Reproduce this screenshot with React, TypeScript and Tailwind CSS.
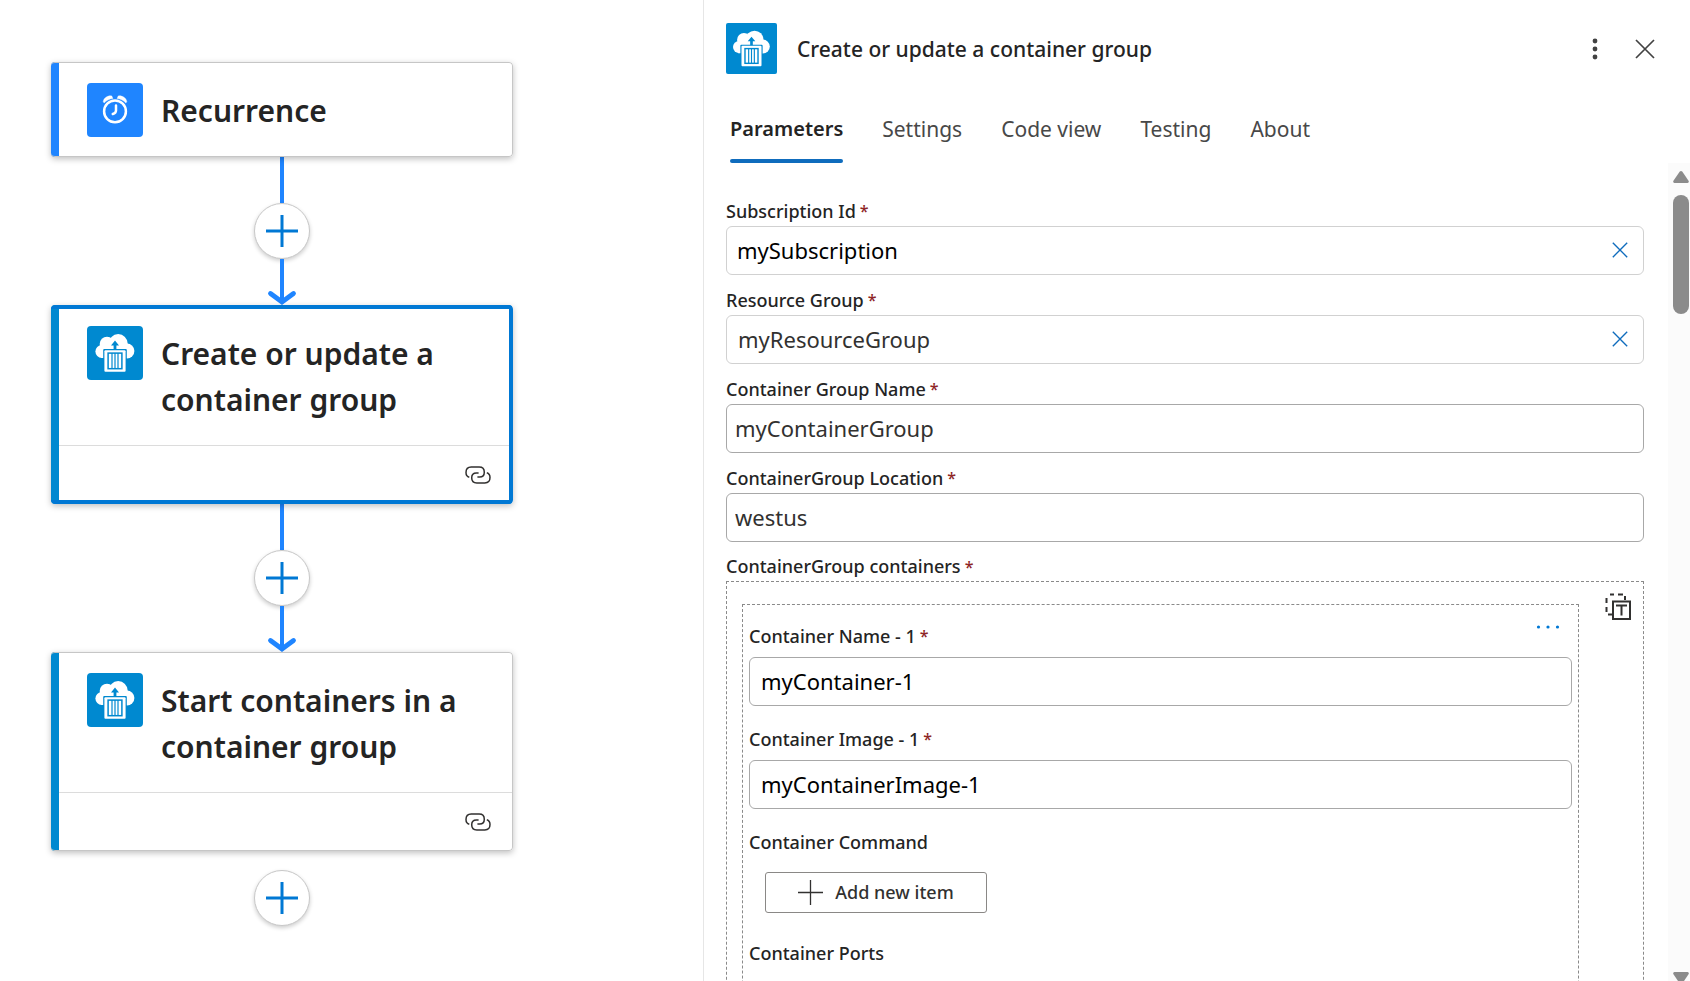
import React, { useId } from "react";

function ContainerIcon({ className }: { className: string }) {
  return (
    <svg viewBox="0 0 54 54" className={className} aria-hidden="true">
      <g fill="#fff">
        <circle cx="13.8" cy="25.5" r="6.4" />
        <circle cx="19" cy="18" r="7.3" />
        <circle cx="30.2" cy="17.6" r="9.5" />
        <circle cx="39" cy="25" r="7.4" />
        <rect x="13" y="18" width="26" height="14" />
      </g>
      <rect x="15.2" y="23" width="23.6" height="24" rx="1" fill="#0089d0" />
      <rect x="16.4" y="24.2" width="21.2" height="21.6" rx="1" fill="#fff" />
      <rect x="20.1" y="27.1" width="13.8" height="15.6" fill="#fff" stroke="#0089d0" strokeWidth="1.5" />
      <path d="M24 27V43M27 27V43M30 27V43" stroke="#0089d0" strokeWidth="1.2" />
      <path d="M27 14.5L31 19.4H28.4V23.5H25.6V19.4H23Z" fill="#0089d0" />
    </svg>
  );
}

function ClockIcon({ className }: { className: string }) {
  return (
    <svg viewBox="0 0 54 54" className={className} fill="none" stroke="#fff" aria-hidden="true">
      <circle cx="27" cy="28.4" r="10.9" strokeWidth="2.5" />
      <path d="M28 22.6V27.4C28 29.2 26.6 30.4 24.8 31" strokeWidth="2.5" strokeLinecap="round" />
      <path d="M15.2 18.8C15.6 15 20 12.2 23.8 13L24.9 15.6C21.2 16 18.2 17.6 16.2 20ZM38.8 18.8C38.4 15 34 12.2 30.2 13L29.1 15.6C32.8 16 35.8 17.6 37.8 20Z" fill="#fff" strokeWidth="0.4" />
    </svg>
  );
}

function LinkIcon() {
  return (
    <svg viewBox="0 0 26 18" className="h-[18px] w-[26px]" fill="none" stroke="#323130" strokeWidth="1.5" aria-hidden="true">
      <path d="M4.3 11.2C2.2 10.6 1 8.8 1 6.4C1 3 3 1 6.2 1H14.2C17.2 1 19.3 3 19.3 6.2C19.3 9.2 17.4 11 14.6 11H12.4" />
      <path d="M21.8 6.8C23.8 7.4 25 9.2 25 11.6C25 15 23 17 19.8 17H11.8C8.8 17 6.7 15 6.7 11.8C6.7 8.8 8.6 7 11.4 7H13.6" />
    </svg>
  );
}

function PlusIcon({ className }: { className: string }) {
  return (
    <svg viewBox="0 0 32 32" className={className} aria-hidden="true">
      <path d="M16 0V32M0 16H32" stroke="currentColor" strokeWidth="3" />
    </svg>
  );
}

function CrossIcon({ className }: { className: string }) {
  return (
    <svg viewBox="0 0 20 20" className={className} fill="none" stroke="currentColor" strokeWidth="1.7" aria-hidden="true">
      <path d="M1 1L19 19M19 1L1 19" />
    </svg>
  );
}

function AddStep() {
  return (
    <button
      type="button"
      aria-label="Add a step"
      className="flex size-14 items-center justify-center rounded-full border border-[#c8c8c8] bg-white text-[#0078d4] shadow-[0_2px_4px_rgba(0,0,0,0.2)]"
    >
      <PlusIcon className="size-8" />
    </button>
  );
}

function Connector() {
  return (
    <div className="flex flex-col items-center">
      <span className="h-[46px] w-1 bg-[#1f85ff]" />
      <AddStep />
      <svg viewBox="0 0 30 46" className="h-[46px] w-[30px]" fill="none" stroke="#1f85ff" aria-hidden="true">
        <path d="M15 0V43" strokeWidth="4" />
        <path d="M3.5 34.5L15 43L26.5 34.5" strokeWidth="4.8" strokeLinecap="round" />
      </svg>
    </div>
  );
}

type StepProps = { title: string; kind: "clock" | "container"; selected?: boolean };

function StepCard({ title, kind, selected }: StepProps) {
  const clock = kind === "clock";
  return (
    <article className="relative flex w-full overflow-hidden rounded-[4px] bg-white shadow-[0_2px_6px_rgba(0,0,0,0.25)]">
      <span className={clock ? "w-2 shrink-0 bg-[#1f85ff]" : "w-2 shrink-0 bg-[#0089d0]"} />
      <div className="flex-1">
        <div className={clock ? "flex h-[95px] gap-[18px] pt-[21px] pl-7" : "flex h-[140px] gap-[18px] pt-[21px] pl-7"}>
          <span
            className={
              clock
                ? "flex h-[54px] w-14 shrink-0 justify-center rounded-[4px] bg-[#1f85ff]"
                : "flex h-[54px] w-14 shrink-0 justify-center rounded-[4px] bg-[#0089d0]"
            }
          >
            {clock ? <ClockIcon className="size-[54px]" /> : <ContainerIcon className="size-[54px]" />}
          </span>
          <h2 className="max-w-[320px] pt-[5px] text-[30px] leading-[46px] font-semibold text-[#242424]">{title}</h2>
        </div>
        {!clock && (
          <div className="flex h-[59px] items-center justify-end border-t border-[#dcdcdc] pr-[22px]">
            <LinkIcon />
          </div>
        )}
      </div>
      <span
        className={
          selected
            ? "pointer-events-none absolute inset-0 rounded-[4px] border-4 border-l-0 border-[#0078d4]"
            : "pointer-events-none absolute inset-0 rounded-[4px] border border-l-0 border-[#c6c6c6]"
        }
      />
    </article>
  );
}

function LabelText({ text, required }: { text: string; required?: boolean }) {
  return (
    <>
      {text}
      {required && <span className="text-[16px] text-[#8e2626]"> *</span>}
    </>
  );
}

type FieldProps = { label: string; value: string; tone: string; pad: string; border: string; clearable?: boolean; nested?: boolean };

function Field({ label, value, tone, pad, border, clearable, nested }: FieldProps) {
  const id = useId();
  return (
    <div className={nested ? "pb-0.5" : ""}>
      <label
        htmlFor={id}
        className={
          nested
            ? "flex h-[52px] items-center gap-1 pt-[10px] text-[18px] font-medium text-[#242424]"
            : "flex h-10 items-center gap-1 pt-[10px] text-[18px] font-medium text-[#242424]"
        }
      >
        <LabelText text={label} required />
      </label>
      <div className={`flex h-[49px] items-center rounded-[6px] border bg-white pb-[2px] ${border}`}>
        <input id={id} defaultValue={value} className={`h-full min-w-0 flex-1 bg-transparent text-[22px] outline-none ${tone} ${pad}`} />
        {clearable && (
          <button type="button" aria-label={`Clear ${label}`} className="mr-[15px] text-[#0f6cbd]">
            <CrossIcon className="size-4" />
          </button>
        )}
      </div>
    </div>
  );
}

const tabs = ["Settings", "Code view", "Testing", "About"];

export default function App() {
  return (
    <div className="flex h-screen overflow-hidden bg-white font-['Noto_Sans','Open_Sans',sans-serif]">
      <main className="w-[703px] shrink-0 pt-[62px] pl-[51px]">
        <div className="flex w-[462px] flex-col items-center">
          <StepCard title="Recurrence" kind="clock" />
          <Connector />
          <StepCard title="Create or update a container group" kind="container" selected />
          <Connector />
          <StepCard title="Start containers in a container group" kind="container" />
          <div className="pt-[19px]">
            <AddStep />
          </div>
        </div>
      </main>

      <aside className="flex min-w-0 flex-1 flex-col border-l border-[#e6e6e6]">
        <header className="flex items-center pt-[23px] pr-[35px] pl-[22px]">
          <span className="rounded-[2px] bg-[#0089d0]">
            <ContainerIcon className="size-[51px]" />
          </span>
          <h1 className="flex-1 pt-0.5 pl-5 text-[21px] font-medium text-[#242424]">Create or update a container group</h1>
          <button type="button" aria-label="More options" className="p-1 text-[#424242]">
            <svg viewBox="0 0 6 22" className="h-[22px] w-[6px]" fill="currentColor" aria-hidden="true">
              <circle cx="3" cy="3" r="2.4" />
              <circle cx="3" cy="11" r="2.4" />
              <circle cx="3" cy="19" r="2.4" />
            </svg>
          </button>
          <button type="button" aria-label="Close" className="ml-[33px] text-[#424242]">
            <CrossIcon className="size-5" />
          </button>
        </header>

        <nav role="tablist" className="flex h-[89px] items-end gap-[39px] pl-[26px] text-[21px] text-[#484848]">
          <button type="button" role="tab" aria-selected="true" className="flex flex-col gap-[15px] text-[20px] font-semibold text-[#242424]">
            <span className="leading-[30px]">Parameters</span>
            <span className="h-1 w-full rounded-full bg-[#0f6cbd]" />
          </button>
          {tabs.map((tab) => (
            <button key={tab} type="button" role="tab" aria-selected="false" className="pb-[19px] leading-[30px]">
              {tab}
            </button>
          ))}
        </nav>

        <div className="flex min-h-0 flex-1">
          <div className="min-w-0 flex-1 overflow-hidden pt-[23px] pr-6 pl-[22px]">
            <Field label="Subscription Id" value="mySubscription" tone="text-black" pad="pl-[10px]" border="border-[#d1d1d1]" clearable />
            <Field label="Resource Group" value="myResourceGroup" tone="text-[#323130]" pad="pl-[11px]" border="border-[#d1d1d1]" clearable />
            <Field label="Container Group Name" value="myContainerGroup" tone="text-[#323130]" pad="pl-2" border="border-[#a8a8a8]" />
            <Field label="ContainerGroup Location" value="westus" tone="text-[#323130]" pad="pl-2" border="border-[#a8a8a8]" />
            <section>
              <h3 className="flex h-[39px] items-center gap-1 pt-[10px] text-[18px] font-medium text-[#242424]">
                <LabelText text="ContainerGroup containers" required />
              </h3>
              <div className="flex items-start border border-dashed border-[#8a8a8a]">
                <div className="relative mt-[22px] ml-[15px] h-[480px] min-w-0 flex-1 border border-dashed border-[#8a8a8a] px-[6px]">
                  <button type="button" aria-label="Item actions" className="absolute top-4 right-[14px] p-1 text-[#0078d4]">
                    <svg viewBox="0 0 24 4" className="h-1 w-6" fill="currentColor" aria-hidden="true">
                      <circle cx="2.5" cy="2" r="1.6" />
                      <circle cx="12" cy="2" r="1.6" />
                      <circle cx="21.5" cy="2" r="1.6" />
                    </svg>
                  </button>
                  <Field label="Container Name - 1" value="myContainer-1" tone="text-black" pad="pl-[11px]" border="border-[#a8a8a8]" nested />
                  <Field label="Container Image - 1" value="myContainerImage-1" tone="text-black" pad="pl-[11px]" border="border-[#a8a8a8]" nested />
                  <h4 className="flex h-[52px] items-center pt-[10px] text-[18px] font-medium text-[#242424]">Container Command</h4>
                  <button
                    type="button"
                    className="mt-[9px] ml-4 flex h-[41px] w-[222px] items-center justify-center gap-3 rounded-[3px] border border-[#8a8886] text-[18px] font-medium text-[#323130]"
                  >
                    <svg viewBox="0 0 25 25" className="size-[25px]" aria-hidden="true">
                      <path d="M12.5 0V25M0 12.5H25" stroke="currentColor" strokeWidth="1.3" />
                    </svg>
                    Add new item
                  </button>
                  <h4 className="flex h-[68px] items-center pt-3 text-[18px] font-medium text-[#242424]">Container Ports</h4>
                </div>
                <button type="button" aria-label="Switch to text input" className="mt-[11px] mr-3 ml-[26px] text-[#323130]">
                  <svg viewBox="0 0 26 27" className="h-[27px] w-[26px]" fill="none" stroke="currentColor" strokeWidth="2" aria-hidden="true">
                    <path d="M5 1.6H9M13 1.6H18M20 3V7M1.5 5V10M1.5 14V19M3 21.5H7" />
                    <path d="M8 8.5H25V26H8Z" />
                    <path d="M11 12.5H22M16.5 12.5V22.5" />
                  </svg>
                </button>
              </div>
            </section>
          </div>

          <div className="flex w-[22px] shrink-0 flex-col items-center justify-between bg-[#fbfbfb] pt-2 pl-1 text-[#8b8b8b]">
            <div className="flex flex-col items-center gap-3">
              <svg viewBox="0 0 16 12" className="h-3 w-4" fill="currentColor" aria-hidden="true">
                <path d="M6.6 0.8Q8-0.7 9.4 0.8L15.7 10Q16.2 11.8 14.6 12H1.4Q-0.2 11.8 0.3 10Z" />
              </svg>
              <span className="h-[119px] w-4 rounded-full bg-[#8b8b8b]" />
            </div>
            <svg viewBox="0 0 16 9" className="h-[9px] w-4" fill="currentColor" aria-hidden="true">
              <path d="M1.4 0H14.6Q16.2 0.2 15.7 2L11 9H5L0.3 2Q-0.2 0.2 1.4 0Z" />
            </svg>
          </div>
        </div>
      </aside>
    </div>
  );
}
